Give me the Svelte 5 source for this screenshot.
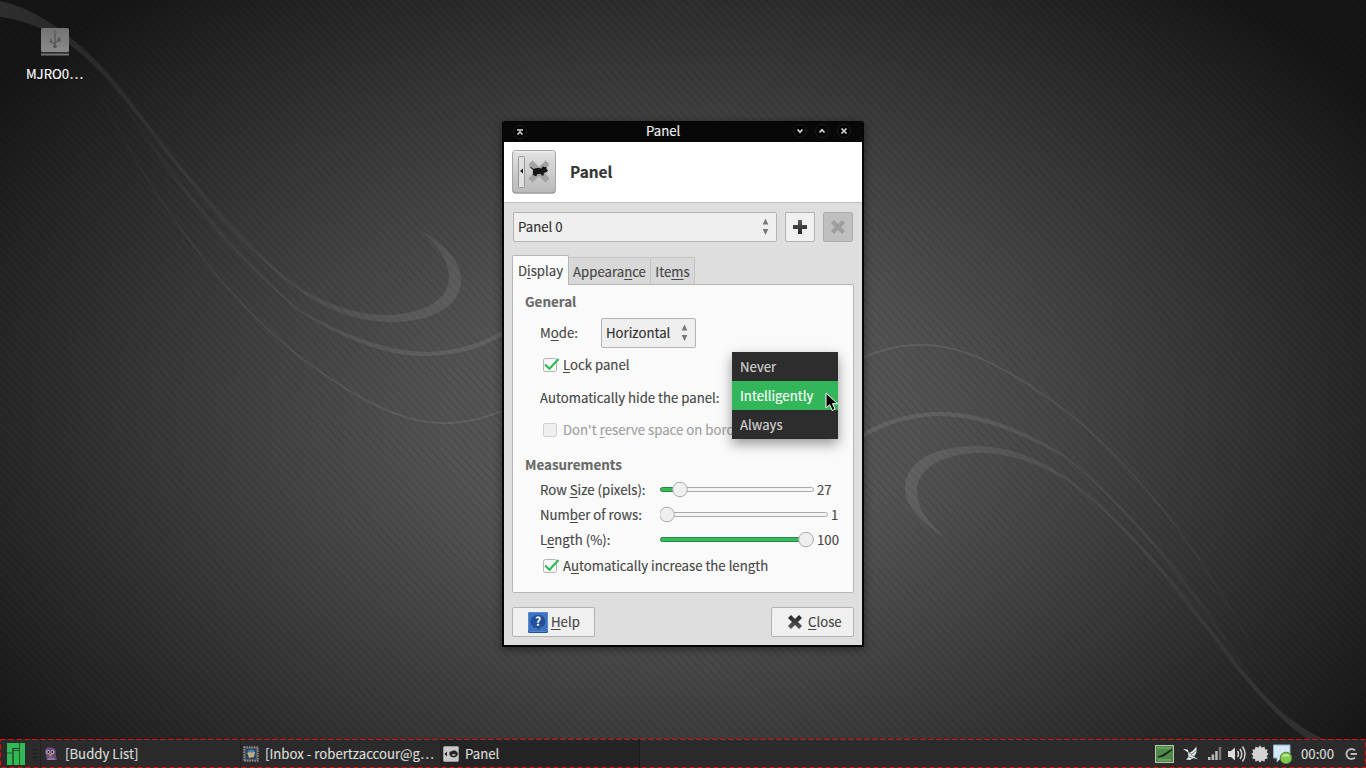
<script>
  const tasks = [
    { label: '[Buddy List]', icon: 'buddy', active: false },
    { label: '[Inbox - robertzaccour@g…', icon: 'mail', active: false },
    { label: 'Panel', icon: 'panel', active: true }
  ];
  const sliders = [
    { a: 'Row ', u: 'S', b: 'ize (pixels):', value: '27', track: 154, knob: 20 },
    { a: 'Num', u: 'b', b: 'er of rows:', value: '1', track: 168, knob: 7 },
    { a: 'L', u: 'e', b: 'ngth (%):', value: '100', track: 154, knob: 146 }
  ];
</script>

{#snippet cross(dark)}
  <svg width="16" height="16" viewBox="0 0 16 16">
    <defs><linearGradient id="xg" x1="0" y1="0" x2="0" y2="1"><stop offset="0" stop-color="#262626" /><stop offset="1" stop-color="#5a5a5a" /></linearGradient></defs>
    <path d="M4 1 8 5 12 1 15 4 11 8 15 12 12 15 8 11 4 15 1 12 5 8 1 4Z" fill={dark ? 'url(#xg)' : '#a09d9d'} />
  </svg>
{/snippet}

{#snippet arrows()}
  <svg class="arrows" width="7" height="18" viewBox="0 0 7 18">
    <path d="M3.5 0.5 6.3 6.5H.7ZM3.5 17 6.3 11H.7Z" fill="#777" />
  </svg>
{/snippet}

{#snippet check(on)}
  <svg class="check" width="18" height="16" viewBox="0 0 18 16">
    <rect x="1.5" y="1.5" width="13" height="13" rx="1.8" fill={on ? '#f7f7f7' : '#f0f0f0'} stroke={on ? '#b4b4b4' : '#cfcfcf'} />
    {#if on}<path d="M3 7.500 7.500 11.700 16.500 2" fill="none" stroke="#2dba55" stroke-width="2.100" />{/if}
  </svg>
{/snippet}

{#snippet panelIcon(size)}
  <svg width={size} height={size} viewBox="0 0 44 44">
    <defs>
      <linearGradient id="pg" x1="0" y1="0" x2="0" y2="1"><stop offset="0" stop-color="#e2e2e2" /><stop offset="1" stop-color="#b9b9b9" /></linearGradient>
    </defs>
    <rect x=".5" y="1" width="43" height="42.5" rx="3" fill="#6c6c6c" />
    <rect x=".5" y=".5" width="43" height="42" rx="3" fill="url(#pg)" stroke="#a5a5a5" />
    <path d="M2 1.8H42" stroke="#f7f7f7" />
    <rect x="6.500" y="6.500" width="6" height="31" rx="1" fill="#e0e0e0" stroke="#969696" />
    <path d="M11 18.500V23.500L8 21Z" fill="#222" />
    <path d="M20.500 10.500 27 17 33.500 10.500 37.500 14.500 31.200 21.500 37.500 28.500 33.500 32.500 27 26 20.500 32.500 16.500 28.500 23 21.500 16.500 14.500Z" fill="#a2a2a2" />
    <path d="M17 16.500Q20 17 21.500 19Q25 17.500 29.500 18.500L31 16.300 32.500 17.300 34.300 16.800 34.500 18.800 36 20.800 34 22.500 32 22.800 31.500 25.500H29.500L29 23.800 25 24.300 24.500 26H22.500L22 24.500 20.800 25.500 21 20Z" fill="#151515" />
  </svg>
{/snippet}

<div class="desktop">
  <svg class="wall" width="1366" height="739" viewBox="0 0 1366 739">
    <defs>
      <radialGradient id="bg" gradientUnits="userSpaceOnUse" cx="0" cy="0" r="1" gradientTransform="translate(680 420) scale(840 570)">
        <stop offset="0" stop-color="#606060" />
        <stop offset=".3" stop-color="#525252" />
        <stop offset=".6" stop-color="#3a3a3a" />
        <stop offset=".85" stop-color="#242424" />
        <stop offset="1" stop-color="#151515" />
      </radialGradient>
      <pattern id="hatch" width="6" height="6" patternUnits="userSpaceOnUse" patternTransform="rotate(-43)">
        <path d="M2 0V6" stroke="#000" stroke-opacity=".08" stroke-width="2.500" />
      </pattern>
      <linearGradient id="fade" gradientUnits="userSpaceOnUse" x1="90" y1="60" x2="440" y2="330"><stop offset="0" stop-color="#fff" stop-opacity="0" /><stop offset=".5" stop-color="#fff" stop-opacity=".05" /><stop offset="1" stop-color="#fff" stop-opacity=".09" /></linearGradient>
      <linearGradient id="band" gradientUnits="userSpaceOnUse" x1="0" y1="0" x2="440" y2="330"><stop offset="0" stop-color="#fff" stop-opacity=".11" /><stop offset=".35" stop-color="#fff" stop-opacity=".05" /><stop offset=".65" stop-color="#fff" stop-opacity=".05" /><stop offset="1" stop-color="#fff" stop-opacity=".09" /></linearGradient>
      <g id="ribbons">
        <path d="M420 230C445 245 462 262 461 282C459 312 420 323 388 322C355 321 325 309 300 291C235 245 175 165 125 100C85 50 50 24 0 17V1C50 12 95 55 130 100C180 165 235 240 300 288C330 306 360 316 390 315C425 313 448 300 449 278C449 262 440 247 420 230Z" fill="url(#band)" />
        <path d="M95 60C135 125 195 225 300 312C350 343 390 357 430 356C460 355 482 347 502 336V331C480 344 455 351 430 352C390 352 350 338 300 310C205 230 145 130 95 60Z" fill="url(#fade)" />
        <path d="M95 85C145 185 210 285 300 357C385 420 435 438 502 411" fill="none" stroke="url(#fade)" stroke-width="1.800" />
      </g>
    </defs>
    <rect width="1366" height="739" fill="url(#bg)" />
    <rect width="1366" height="739" fill="url(#hatch)" />
    <use href="#ribbons" />
    <use href="#ribbons" transform="rotate(180 683 384)" />
  </svg>

  <div class="drive">
    <svg width="30" height="30" viewBox="0 0 30 30">
      <defs><linearGradient id="dg" x1="0" y1="0" x2="0" y2="1"><stop offset="0" stop-color="#737373" /><stop offset="1" stop-color="#8a8a8a" /></linearGradient></defs>
      <rect x="1" y="1" width="28" height="24" rx="1.500" fill="url(#dg)" />
      <path d="M1 25.500H29V28.500H1Z" fill="#777" />
      <path d="M1 26H29" stroke="#222" stroke-width="1.200" />
      <g fill="none" stroke="#555" stroke-width="1.300">
        <path d="M15 5V20M15 17.500 11 15V12M15 15.500 19 13.500V10" />
      </g>
      <circle cx="15" cy="4.500" r="1.700" fill="#6a6a6a" /><circle cx="15" cy="19.500" r="1.800" fill="#555" />
      <circle cx="11" cy="14.500" r="1.300" fill="#555" /><path d="M17.500 11.500h3v3h-3z" fill="#555" />
    </svg>
    <span>MJRO0…</span>
  </div>

  <div class="window">
    <div class="titlebar">
      <svg width="18" height="18" viewBox="0 0 18 18"><circle cx="9" cy="9" r="6.500" fill="#050505" stroke="#1b1b1b" /><path d="M6 7H12M6.500 11.500 9 8.800 11.500 11.500" fill="none" stroke="#ddd" stroke-width="1.400" /></svg>
      <span>Panel</span>
      <div class="wbtns">
        <svg width="18" height="18" viewBox="0 0 18 18"><circle cx="9" cy="9" r="6.500" fill="#050505" stroke="#1b1b1b" /><path d="M6.500 7.500 9 10.200 11.500 7.500" fill="none" stroke="#ccd5d5" stroke-width="1.700" /></svg>
        <svg width="18" height="18" viewBox="0 0 18 18"><circle cx="9" cy="9" r="6.500" fill="#050505" stroke="#1b1b1b" /><path d="M6.500 10.500 9 7.800 11.500 10.500" fill="none" stroke="#ccd5d5" stroke-width="1.700" /></svg>
        <svg width="18" height="18" viewBox="0 0 18 18"><circle cx="9" cy="9" r="6.500" fill="#050505" stroke="#1b1b1b" /><path d="M6.500 6.500 11.500 11.500M11.500 6.500 6.500 11.500" fill="none" stroke="#ccd5d5" stroke-width="1.700" /></svg>
      </div>
    </div>
    <div class="head">
      {@render panelIcon(44)}
      <h1>Panel</h1>
    </div>
    <div class="body">
      <div class="selector">
        <div class="combo grow"><span>Panel 0</span>{@render arrows()}</div>
        <div class="sq"><svg width="16" height="16" viewBox="0 0 16 16"><defs><linearGradient id="plg" x1="0" y1="0" x2="0" y2="1"><stop offset="0" stop-color="#5a5a5a" /><stop offset="1" stop-color="#262626" /></linearGradient></defs><path d="M6 1H10V6H15V10H10V15H6V10H1V6H6Z" fill="url(#plg)" /></svg></div>
        <div class="sq off">{@render cross(false)}</div>
      </div>
      <div class="tabs">
        <div class="tab on">D<u>i</u>splay</div>
        <div class="tab t2">Appeara<u>n</u>ce</div>
        <div class="tab t3">Ite<u>m</u>s</div>
      </div>
      <div class="page">
        <h2>General</h2>
        <div class="row mode"><span>M<u>o</u>de:</span><div class="combo small"><span>Horizontal</span>{@render arrows()}</div></div>
        <div class="row lock">{@render check(true)}<span><u>L</u>ock panel</span></div>
        <div class="row hide"><span>Automatically hide the panel:</span></div>
        <div class="row res">{@render check(false)}<span>Don't <u>r</u>eserve space on bord</span></div>
        <h2 class="m">Measurements</h2>
        {#each sliders as s}
          <div class="row slide">
            <span class="lab">{s.a}<u>{s.u}</u>{s.b}</span>
            <svg width={s.track} height="18" viewBox="0 0 {s.track} 18">
              <rect x=".5" y="6.500" width={s.track - 1} height="4" rx="2" fill="#f4f4f4" stroke="#ababab" />
              {#if s.knob > 7}<rect x=".5" y="6.500" width={s.knob} height="4" rx="2" fill="#33bd5b" stroke="#2a8846" />{/if}
              <circle cx={s.knob} cy="8.500" r="7.300" fill="#efefef" stroke="#aaa" />
            </svg>
            <span class="val">{s.value}</span>
          </div>
        {/each}
        <div class="row inc">{@render check(true)}<span>A<u>u</u>tomatically increase the length</span></div>
      </div>
      <div class="actions">
        <div class="btn help">
          <svg width="20" height="21" viewBox="0 0 20 21"><rect width="20" height="21" rx="1.500" fill="#22509a" /><rect x=".5" y=".5" width="19" height="19" rx="1.500" fill="#3d74c2" stroke="#5588d0" /><path d="M10 3C5 3 2.500 6 2.500 9.500S5 16 9 16L11 18.500 12 15.800C15.500 15 17.500 12.500 17.500 9.500S15 3 10 3Z" fill="#234f9b" /><text x="10" y="14" text-anchor="middle" fill="#fff" font-size="12" font-weight="700">?</text></svg>
          <span><u>H</u>elp</span>
        </div>
        <div class="btn close">{@render cross(true)}<span><u>C</u>lose</span></div>
      </div>
    </div>
  </div>

  <div class="menu">
    <div>Never</div>
    <div class="sel">Intelligently</div>
    <div>Always</div>
  </div>
  <svg class="cursor" width="14" height="20" viewBox="0 0 14 20"><path d="M1 1V16L4.700 12.800 7.200 18.500 10 17.200 7.500 11.700H12.500Z" fill="#050505" stroke="#fff" /></svg>

  <div class="taskbar">
    <svg class="start" width="18" height="22" viewBox="0 0 18 22"><path d="M0 0H12V5H5.500V22H0ZM13 0H18V22H13ZM6.500 6H12V22H6.500Z" fill="#32b956" /><path d="M0 10H5.500M6.500 7.500H12.500M12.500 0V22M6 5V22" stroke="#205a32" fill="none" /></svg>
    <div class="grip"><i></i><i></i><i></i></div>
    {#each tasks as t}
      <div class="task" class:active={t.active}>
        {#if t.icon === 'buddy'}
          <svg width="16" height="16" viewBox="0 0 16 16"><path d="M2 6C2 1.500 6 1 8 1.500C12 1.500 13.500 5 12.500 9L14 14H4L3 10Z" fill="#6f4a80" /><circle cx="5" cy="6" r="2" fill="#b5a9b5" /><circle cx="9.500" cy="6" r="2" fill="#b5a9b5" /><circle cx="5.300" cy="6" r=".9" fill="#222" /><circle cx="9.300" cy="6" r=".9" fill="#222" /><path d="M5.500 8H9.500L7 11Z" fill="#b9895e" /><path d="M4 14C4 10.500 11 10.500 12.500 14Z" fill="#8d7b98" /></svg>
        {:else if t.icon === 'mail'}
          <svg width="16" height="16" viewBox="0 0 16 16"><rect x="1" y="1" width="14" height="14" fill="#595959" stroke="#8d8d8d" stroke-width="1.500" stroke-dasharray="1.500 1" /><rect x="3" y="3" width="10" height="10" fill="#24436b" /><path d="M4 7 9 4.500 12 6 11 11 6 12 5 9Z" fill="#c0ac7c" /><path d="M4 5 8 3.500 12 5 9 7Z" fill="#4b81b5" /></svg>
        {:else}
          <svg width="16" height="16" viewBox="0 0 16 16"><rect x=".5" y=".5" width="15" height="15" rx="1" fill="#c9c9c9" stroke="#999" /><path d="M4 5.500V10.500L1.500 8Z" fill="#222" /><path d="M6.500 5.500 8 5.800C9.500 4 12.500 4.200 14 6L15 7.500 14.500 9C13.500 11.500 10 12 8 10.500L6.500 9Z" fill="#222" /><path d="M8.500 9C10 7.500 12 8 13 9L10.500 10Z" fill="#bbb" /></svg>
        {/if}
        <span>{t.label}</span>
      </div>
    {/each}
    <div class="fill"></div>
    <div class="tray">
      <svg width="19" height="18" viewBox="0 0 19 18"><rect x=".5" y=".5" width="18" height="17" fill="#4f8949" stroke="#b8c5ad" /><path d="M2.500 3H16M2.500 15H16" stroke="#86b075" /><path d="M2.500 11.500 7 10 16.500 4 17.500 5 8.500 11.500 3.500 12.500Z" fill="#192019" /></svg>
      <svg class="bird" width="16" height="18" viewBox="0 0 16 18"><path d="M0 4 4.500 4.500 6.500 8 10 5.500 13.500 1.500 13.500 7.500 11 11.500 15 14.500 10.500 13 7 15 3 14.500 5.500 12 5 7.500Z" fill="#e1e8e8" /><path d="M5 6 8 9.500 11 12M8 9.500 13 6M6 12 9 13" stroke="#536268" stroke-width=".8" fill="none" /></svg>
      <svg class="sig" width="15" height="15" viewBox="0 0 15 15"><path d="M1 11h2.500v3H1zM4.600 8.500h2.500V14H4.600zM8.200 5h2.500v9H8.200z" fill="#bcbcbc" /><path d="M11.800 1h2.500v13h-2.500z" fill="#777" /></svg>
      <svg class="vol" width="20" height="18" viewBox="0 0 20 18"><path d="M1 6H4L8 2.500V15.500L4 12H1Z" fill="#ddd" /><path d="M10.500 6Q12.500 9 10.500 12M13 4Q16.500 9 13 14M15.500 1.500Q20.500 9 15.500 16.500" fill="none" stroke="#d0d0d0" stroke-width="1.500" /></svg>
      <svg class="gear" width="18" height="18" viewBox="0 0 18 18"><path d="M9 .3 10.800 2.700 13.500 1.500 14 4.300 16.800 4.700 15.700 7.300 17.700 9 15.700 10.800 16.800 13.500 14 13.900 13.500 16.700 10.800 15.500 9 17.700 7.200 15.500 4.500 16.700 4 13.900 1.200 13.500 2.300 10.800.3 9 2.300 7.300 1.200 4.700 4 4.300 4.500 1.500 7.200 2.700Z" fill="#d3d3d3" /></svg>
      <svg class="chat" width="20" height="20" viewBox="0 0 20 20"><path d="M.5 1H17V14H8L4 18V14H.5Z" fill="#d6e6f5" stroke="#8fafcb" /><circle cx="13" cy="14" r="5.800" fill="#83c84f" stroke="#4d852c" /><path d="M9 12.500A4.500 4.500 0 0 1 17 12.500Z" fill="#c2e69e" /></svg>
      <span class="clock">00:00</span>
      <svg class="power" width="14" height="14" viewBox="0 0 14 14"><path d="M11 3.500A5 5 0 1 0 11 10.500M6.500 7H13" fill="none" stroke="#b9b9b9" stroke-width="1.900" /></svg>
    </div>
    <svg class="dash" width="1366" height="29" viewBox="0 0 1366 29"><rect x=".5" y=".5" width="1365" height="28" fill="none" stroke="#f00808" stroke-dasharray="5 3" /></svg>
  </div>
</div>

<style>
  :global(body) { background: #222; overflow: hidden; }
  .desktop { position: relative; width: 1366px; height: 768px; overflow: hidden; display: flex; flex-direction: column; font: 400 13.2px/20px "Noto Sans CJK SC", "Noto Sans", sans-serif; color: #464646; -webkit-text-stroke: 0.15px currentColor; }
  .desktop * { box-sizing: border-box; }
  svg { display: block; flex: none; }
  span, h1, h2, .menu div, .tab { white-space: nowrap; }
  u { text-underline-offset: 2px; text-decoration-thickness: 1px; }
  .wall { width: 1366px; height: 739px; }
  .drive { position: absolute; left: 5px; top: 27px; width: 99px; display: flex; flex-direction: column; align-items: center; gap: 7px; color: #fff; text-shadow: 0 1px 1px #000; }
  .window { position: absolute; left: 502px; top: 121px; width: 362px; height: 526px; border: 2px solid #060606; border-top-width: 1px; border-bottom-width: 2px; border-radius: 3px 3px 0 0; background: #dedede; box-shadow: 0 2px 9px rgba(0,0,0,.45); display: flex; flex-direction: column; }
  .titlebar { height: 20px; background: #080808; color: #f0f0f0; display: flex; align-items: center; padding: 0 9px 1px 7px; }
  .titlebar > span { margin: 0 0 2px 117px; }
  .wbtns { display: flex; gap: 4px; margin: 0 0 1px auto; }
  .head { height: 61px; background: #fff; border-bottom: 1px solid #bdbdbd; display: flex; align-items: center; gap: 14px; padding-left: 8px; color: #333; }
  h1 { margin: 0 0 2px; font-size: 15.4px; line-height: 24px; font-weight: 700; }
  .body { padding: 9px 8px 7px; display: flex; flex-direction: column; }
  .selector { display: flex; gap: 8px; padding: 0 1px; }
  .combo { height: 30px; border: 1px solid #b3b3b3; border-radius: 2px; background: #efefef; display: flex; align-items: center; justify-content: space-between; padding: 0 7px 0 4px; color: #303030; }
  .grow { flex: 1; }
  .sq { width: 30px; height: 30px; border: 1px solid #b3b3b3; border-radius: 2px; background: #f0f0f0; display: flex; align-items: center; justify-content: center; }
  .off { background: #bfbfbf; border-color: #adadad; }
  .tabs { display: flex; align-items: flex-end; margin-top: 13px; height: 30px; }
  .tab { height: 27px; line-height: 27px; border: 1px solid #c3c3c3; border-left: 0; border-bottom: 0; background: #d8d8d8; text-align: center; border-radius: 0 2px 0 0; margin-bottom: 1px; }
  .tab.on { width: 57px; height: 30px; line-height: 30px; margin-bottom: 0; border: 1px solid #b5b5b5; border-bottom: 0; border-radius: 2px 2px 0 0; background: #fafafa; z-index: 1; position: relative; }
  .t2 { width: 82px; } .t3 { width: 44px; }
  .page { height: 309px; margin-top: -1px; border: 1px solid #b5b5b5; border-radius: 0 2px 2px 2px; background: #fafafa; padding: 6px 14px 0 12px; }
  h2 { margin: 0; font-size: 13.4px; line-height: 20px; font-weight: 700; color: #696969; }
  .row { display: flex; align-items: center; padding-left: 15px; }
  .mode { height: 30px; margin-top: 7px; }
  .mode > span { width: 61px; }
  .small { width: 95px; height: 30px; }
  .check { margin-right: 3px; margin-left: 2px; }
  .lock { height: 20px; margin-top: 7px; }
  .hide { height: 20px; margin-top: 13px; }
  .res { height: 20px; margin-top: 12px; color: #a0a0a0; }
  .m { margin-top: 14px; }
  .slide { height: 25px; }
  .m + .slide { margin-top: 3px; }
  .lab { width: 120px; flex: none; }
  .val { margin-left: 3px; }
  .inc { height: 20px; margin-top: 4px; }
  .actions { display: flex; justify-content: space-between; margin-top: 14px; }
  .btn { height: 30px; width: 83px; border: 1px solid #b3b3b3; border-radius: 2px; background: #f0f0f0; display: flex; align-items: center; }
  .help { padding-left: 15px; gap: 3px; } .close { padding-left: 15px; gap: 5px; }
  .menu { position: absolute; left: 732px; top: 352px; width: 106px; height: 87px; background: #2d2d2d; color: #d4d4d4; box-shadow: 0 5px 12px rgba(0,0,0,.4); }
  .menu div { height: 29px; line-height: 30px; padding-left: 8px; }
  .menu .sel { background: #33b65a; color: #fff; }
  .cursor { position: absolute; left: 825px; top: 392px; }
  .taskbar { position: relative; height: 29px; background: #2b2b2b; color: #dcdcdc; display: flex; align-items: center; }
  .start { margin-left: 7px; }
  .grip { width: 15px; padding-left: 8px; display: flex; flex-direction: column; gap: 3px; }
  .grip i { width: 4px; height: 1px; background: #1b1b1b; }
  .task { width: 200px; height: 29px; padding-left: 2px; display: flex; align-items: center; gap: 6px; border-left: 1px solid #222; }
  .task.active { background: #242424; border-right: 1px solid #191919; }
  .fill { flex: 1; }
  .tray { display: flex; align-items: center; }
  .bird { margin-left: 9px; } .sig { margin-left: 8px; } .vol { margin-left: 5px; } .gear { margin-left: 4px; } .chat { margin-left: 4px; }
  .clock { margin-left: 8px; } .power { margin: 0 8px 0 10px; }
  .dash { position: absolute; inset: 0; }
</style>
